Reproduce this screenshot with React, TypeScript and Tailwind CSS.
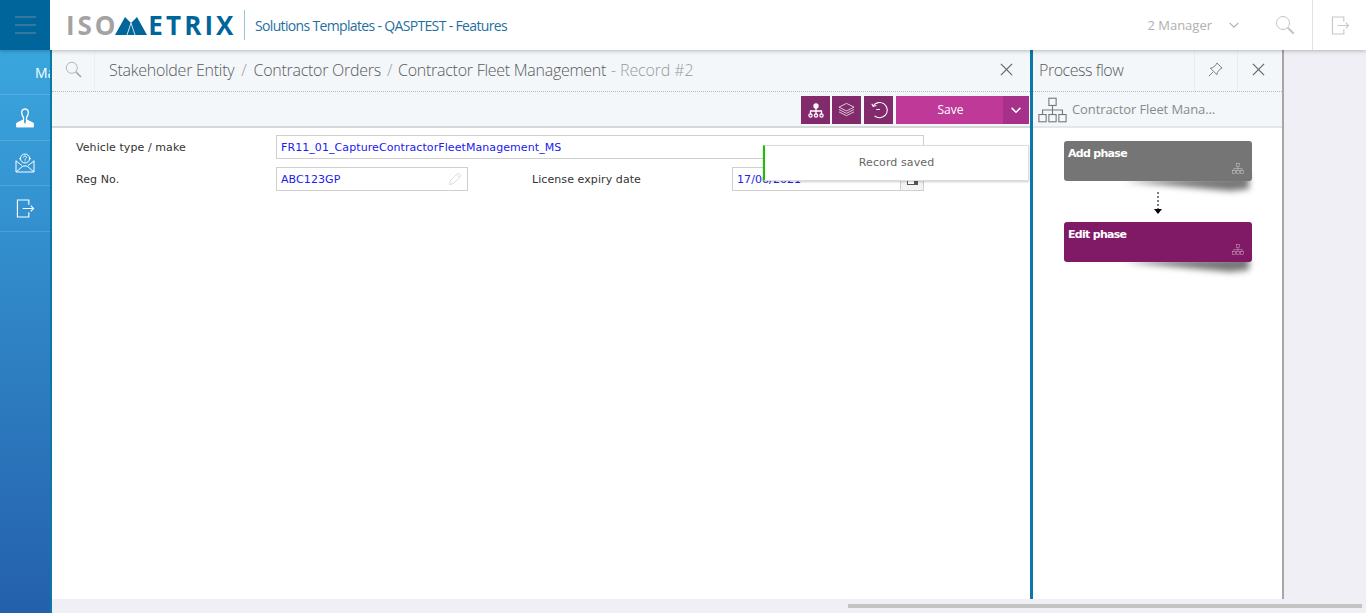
import React from 'react';

const uiFont = "font-['Open_Sans','Noto_Sans',sans-serif]";
const formFont = "font-['DejaVu_Sans',sans-serif]";

function FlowIcon({ className = '' }: { className?: string }) {
  return (
    <svg viewBox="0 0 16 14" className={className} fill="none" stroke="currentColor" strokeWidth="0.6">
      <rect x="6" y="0.5" width="4" height="4" />
      <path d="M8 4.500v2.500M2.500 9.500V7h11v2.500M8 7v2.500" />
      <rect x="0.5" y="9.500" width="4" height="4" />
      <rect x="6" y="9.500" width="4" height="4" />
      <rect x="11.500" y="9.500" width="4" height="4" />
    </svg>
  );
}

function ExitIcon({ className = '' }: { className?: string }) {
  return (
    <svg viewBox="0 0 20 20" className={className} fill="none" stroke="currentColor" strokeWidth="1.2">
      <path d="M13.500 6V1H1.500v18h12v-5" />
      <path d="M7 10h11.500M15.500 7l3 3-3 3" />
    </svg>
  );
}

function SearchIcon({ className = '' }: { className?: string }) {
  return (
    <svg viewBox="0 0 20 20" className={className} fill="none" stroke="currentColor" strokeWidth="1">
      <circle cx="8" cy="8" r="6.500" />
      <path d="M12.800 12.800l6 6" strokeWidth="2" />
    </svg>
  );
}

function CloseIcon({ className = '' }: { className?: string }) {
  return (
    <svg viewBox="0 0 14 14" className={className} fill="none" stroke="currentColor" strokeWidth="1.3">
      <path d="M1 1l12 12M13 1L1 13" />
    </svg>
  );
}

function SideItem({ children, className = '' }: { children: React.ReactNode; className?: string }) {
  return (
    <div className={`flex items-center justify-center border-b border-white/15 text-white ${className}`}>
      {children}
    </div>
  );
}

function ActionButton({ children, className = '' }: { children: React.ReactNode; className?: string }) {
  return (
    <div className={`flex h-7 w-[29px] items-center justify-center bg-[#822a6c] text-white ${className}`}>
      {children}
    </div>
  );
}

function Phase({ title, color }: { title: string; color: string }) {
  return (
    <div className="relative h-10 w-[188px]">
      <div className="absolute bottom-[-10px] right-[3px] h-[20px] w-[125px] blur-[3px]">
        <div className="h-full w-full bg-[#777] [clip-path:polygon(0_50%,100%_25%,100%_90%,85%_100%)]" />
      </div>
      <div className={`relative h-10 rounded-[3px] px-1 pt-[4px] text-[11px] font-bold leading-[17px] tracking-[-0.7px] text-white ${formFont} ${color}`}>
        {title}
        <FlowIcon className="absolute bottom-[7px] right-[8px] h-[11px] w-[12px] text-white/70" />
      </div>
    </div>
  );
}

export default function App() {
  return (
    <div className={`flex h-[613px] w-[1366px] flex-col overflow-hidden bg-[#f0eff5] ${uiFont}`}>
      <header className="relative z-10 flex h-[50px] shrink-0 bg-white shadow-[0_1px_4px_rgba(0,0,0,0.25)]">
        <div className="flex w-[50px] flex-col items-center justify-center gap-[6px] bg-[#00659b]">
          <span className="h-[2px] w-[21px] bg-[#35789f]" />
          <span className="h-[2px] w-[21px] bg-[#35789f]" />
          <span className="h-[2px] w-[21px] bg-[#35789f]" />
        </div>
        <div className="ml-[16px] flex w-[178px] items-center text-[26px] font-bold leading-none">
          <span className="tracking-[2.9px] text-[#a3a3a3]">ISO</span>
          <svg viewBox="0 0 32 20" className="ml-[-3px] h-[20px] w-[32px] shrink-0 text-[#00659b]">
            <path fill="currentColor" d="M0 20L10 2l6 6 6-6 10 18z" />
            <path fill="none" stroke="#fff" strokeWidth="0.8" d="M12 20l4-12 4 12" />
          </svg>
          <span className="ml-[1px] tracking-[3.1px] text-[#00659b]">ETRIX</span>
        </div>
        <div className="mt-[10px] h-[30px] w-px bg-[#9cc2d8]" />
        <div className="ml-[10px] flex items-center text-[14px] tracking-[-0.66px] text-[#1f6f9f]">
          Solutions Templates - QASPTEST - Features
        </div>
        <div className="ml-auto flex items-center text-[#b0b0b0]">
          <span className="mt-[2px] text-[13px]">2 Manager</span>
          <svg viewBox="0 0 12 8" className="ml-[16px] mt-[1px] h-[7px] w-[12px]" fill="none" stroke="currentColor" strokeWidth="1.3">
            <path d="M1 1l5 5 5-5" />
          </svg>
          <SearchIcon className="ml-[35px] h-[20px] w-[20px] text-[#c4c4c4]" />
          <div className="ml-[17px] flex h-[50px] w-[54px] items-center justify-center border-l border-[#e2e2e2]">
            <ExitIcon className="ml-[2px] h-[19px] w-[19px] text-[#c8c8c8]" />
          </div>
        </div>
      </header>

      <div className="flex min-h-0 flex-1">
        <aside className="flex w-[52px] shrink-0 flex-col border-r-2 border-[#0b78a8] bg-[linear-gradient(180deg,#3aa6de,#2460ac)] text-white">
          <SideItem className="h-[45px] justify-start overflow-hidden pl-[35px] text-[14px]">Ma</SideItem>
          <SideItem className="h-[46px]">
            <svg viewBox="0 0 20 20" className="h-[20px] w-[20px]" fill="none" stroke="currentColor" strokeWidth="1.3">
              <path d="M10 1c-2.500 0-3.500 2-3.300 4 .2 2 1 3.500 1.800 4.500V12L2 15.500V18.500h16v-3L11.500 12V9.500c.8-1 1.600-2.500 1.800-4.500.2-2-.8-4-3.300-4z" />
              <path fill="currentColor" d="M2 15.500L8 12.500l2 6H2zM18 15.500l-6-3-2 6h8z" />
            </svg>
          </SideItem>
          <SideItem className="h-[45px]">
            <svg viewBox="0 0 20 20" className="h-[20px] w-[20px]" fill="none" stroke="currentColor" strokeWidth="1">
              <path d="M1 7.500V19h18V7.500M1 19l7-6h4l7 6M1 8l6 4.500M19 8l-6 4.500M4 6l2-1M16 6l-2-1" />
              <circle cx="10" cy="5.500" r="4.500" />
              <path d="M8.500 4.500c0-2 3-2 3 0 0 1-1.500 1-1.500 2.200M10 7.500v.8" />
            </svg>
          </SideItem>
          <SideItem className="h-[46px]">
            <ExitIcon className="h-[19px] w-[19px]" />
          </SideItem>
        </aside>

        <div className="flex min-w-0 flex-1 flex-col">
          <div className="flex min-h-0 flex-1">
            <main className="relative flex w-[978px] shrink-0 flex-col bg-white">
              <div className="flex h-[42px] items-stretch border-b border-dotted border-[#b5b8bc] bg-[#f3f7fa]">
                <div className="flex w-[43px] items-center justify-center border-r border-dotted border-[#e4e7ea] pb-[2px]">
                  <SearchIcon className="h-[17px] w-[17px] text-[#a8a8a8]" />
                </div>
                <div className="flex items-center pb-[2px] pl-[14px] text-[16px] font-light tracking-[-0.27px] text-[#5a5a5a]">
                  <span>Stakeholder Entity</span>
                  <span className="mx-[7px] text-[#9a9a9a]">/</span>
                  <span>Contractor Orders</span>
                  <span className="mx-[6px] text-[#9a9a9a]">/</span>
                  <span>Contractor Fleet Management</span>
                  <span className="ml-[5px] tracking-[-0.15px] text-[#9a9a9a]">- Record #2</span>
                </div>
                <div className="ml-auto flex w-[45px] items-center justify-center pb-[2px] pr-[2px]">
                  <CloseIcon className="h-[13px] w-[13px] text-[#666]" />
                </div>
              </div>

              <div className="flex h-[36px] items-center justify-end gap-[2px] border-b-2 border-[#d5d7d9] bg-[#f3f7fa] pr-px pt-[2px]">
                <ActionButton>
                  <svg viewBox="0 0 16 14" className="h-[15px] w-[16px]" fill="none" stroke="currentColor" strokeWidth="1.300">
                    <circle cx="8" cy="2.500" r="2" fill="currentColor" />
                    <path d="M8 4.500V11M2.500 11V7.500h11V11" />
                    <circle cx="2.500" cy="12" r="1.600" />
                    <circle cx="8" cy="12" r="1.600" />
                    <circle cx="13.500" cy="12" r="1.600" />
                  </svg>
                </ActionButton>
                <ActionButton>
                  <svg viewBox="0 0 18 16" className="h-[16px] w-[17px]" fill="none" stroke="currentColor" strokeWidth="0.900" opacity="0.85">
                    <path d="M9 1l8 4-8 4-8-4z" />
                    <path d="M1 7.500l8 4 8-4M1 10l8 4 8-4" />
                  </svg>
                </ActionButton>
                <ActionButton className="ml-[1px]">
                  <svg viewBox="0 0 20 20" className="h-[18px] w-[18px]" fill="none" stroke="currentColor" strokeWidth="1.200">
                    <path d="M3.500 5.500A8.500 8.500 0 1 1 5 16.500" />
                    <path d="M2 3l1.500 3 3.500-1M7 9.500h4" />
                  </svg>
                </ActionButton>
                <div className="ml-[1px] flex h-7 w-[133px] bg-[#bf3a98] text-[12px] text-white">
                  <span className="flex flex-1 items-center justify-center pl-[2px]">Save</span>
                  <span className="flex w-[26px] items-center justify-center bg-[#a6308a]">
                    <svg viewBox="0 0 12 8" className="h-[7px] w-[12px]" fill="none" stroke="currentColor" strokeWidth="1.800">
                      <path d="M1 1l5 5 5-5" />
                    </svg>
                  </span>
                </div>
              </div>

              <div className={`grid grid-cols-[200px_192px_64px_200px_192px] grid-rows-[24px_24px] gap-y-2 pl-[24px] pt-[7px] text-[11px] tracking-[0.08px] text-[#333] ${formFont}`}>
                <label className="flex items-center pt-[2px]">Vehicle type / make</label>
                <div className="col-span-4 flex items-center border border-[#cfcfcf] pl-[4px] pt-[2px] text-[#2020ee]">
                  FR11_01_CaptureContractorFleetManagement_MS
                </div>
                <label className="flex items-center pt-[2px]">Reg No.</label>
                <div className="flex items-center justify-between border border-[#cfcfcf] px-[4px] text-[#2020ee]">
                  <span className="pt-[2px]">ABC123GP</span>
                  <svg viewBox="0 0 14 14" className="mr-[1px] h-[14px] w-[14px] text-[#dddddd]" fill="none" stroke="currentColor">
                    <path d="M1.500 12.500l1-4L10 1l3 3-7.500 7.500zM8.500 2.500l3 3" />
                  </svg>
                </div>
                <span />
                <label className="flex items-center pt-[2px]">License expiry date</label>
                <div className="flex items-center justify-between border border-[#cfcfcf] pl-[4px] text-[#2020ee]">
                  <span className="pt-[2px]">17/06/2021</span>
                  <span className="flex h-full w-[23px] items-center justify-center border-l border-[#cfcfcf] bg-[#f3f3f3]">
                    <span className="mt-[3px] h-[8px] w-[11px] border-[1px] border-t-2 border-r-4 border-[#555] bg-white" />
                  </span>
                </div>
              </div>

              <div className={`absolute left-[711px] top-[95px] flex h-[36px] w-[266px] items-center justify-center border border-[#dcdcdc] border-l-2 border-l-[#19c000] bg-white text-[11px] tracking-[0.1px] text-[#666] shadow-[0_1px_2px_rgba(0,0,0,0.2)] ${formFont}`}>
                Record saved
              </div>
            </main>

            <section className="flex w-[254px] shrink-0 flex-col border-l-[3px] border-r-2 border-l-[#0b78a8] border-r-[#a6a6a6] bg-white">
              <div className="flex h-[42px] items-stretch border-b border-dotted border-[#b5b8bc] bg-[#f3f7fa]">
                <div className="flex flex-1 items-center pb-[2px] pl-[6px] text-[16px] font-light tracking-[-0.45px] text-[#5a5a5a]">
                  Process flow
                </div>
                <div className="flex w-[43px] items-center justify-center border-l border-dotted border-[#e0e3e6] pb-[2px] pr-[2px]">
                  <svg viewBox="0 0 16 16" className="h-[15px] w-[15px] text-[#777]" fill="none" stroke="currentColor" strokeWidth="1">
                    <path d="M9.500 1L15 6.500l-1.500.5L10 11l-.5 2.500L2.500 6.500 5 6l4-3.500zM5.500 10.500L1 15" />
                  </svg>
                </div>
                <div className="flex w-[45px] items-center justify-center border-l border-dotted border-[#e0e3e6] pb-[2px] pr-[3px]">
                  <CloseIcon className="h-[13px] w-[13px] text-[#666]" />
                </div>
              </div>
              <div className="flex h-[36px] items-center gap-[5px] border-b-2 border-[#e4e7ea] bg-[#f3f7fa] pl-[5px] text-[13px] tracking-[-0.1px] text-[#8a8a8a]">
                <FlowIcon className="mt-[2px] h-[26px] w-[29px] text-[#777]" />
                <span className="pt-[2px]">Contractor Fleet Mana...</span>
              </div>
              <div className="flex flex-col items-center pl-[1px] pt-[13px]">
                <Phase title="Add phase" color="bg-[#757575]" />
                <svg viewBox="0 0 10 24" className="mb-[6px] mt-[11px] h-[24px] w-[10px]">
                  <path d="M5 0v18" stroke="#000" strokeDasharray="2 2" fill="none" />
                  <path d="M1 17h8l-4 5z" fill="#000" />
                </svg>
                <Phase title="Edit phase" color="bg-[#811a66]" />
              </div>
            </section>
          </div>

          <div className="flex h-[14px] shrink-0 items-center justify-end pr-[4px]">
            <div className="h-[4px] w-[514px] bg-[#c4c4c4]" />
          </div>
        </div>
      </div>
    </div>
  );
}
